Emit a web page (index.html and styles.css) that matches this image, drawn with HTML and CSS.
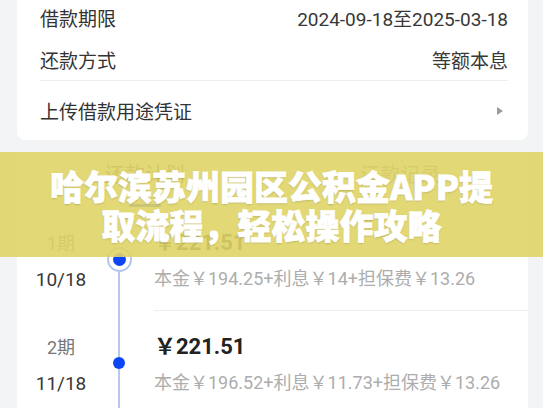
FILE: index.html
```html
<!DOCTYPE html>
<html lang="zh-CN">
<head>
    <meta charset="UTF-8">
    <meta name="viewport" content="width=device-width, initial-scale=1.0">
    <title>哈尔滨苏州园区公积金APP提取流程</title>
    <link rel="stylesheet" href="styles.css">
</head>
<body>
    <div class="page">
        <div class="card info">
            <div class="row">
                <span class="label">借款期限</span>
                <span class="value">2024-09-18至2025-03-18</span>
            </div>
            <div class="row">
                <span class="label">还款方式</span>
                <span class="value">等额本息</span>
            </div>
            <div class="divider"></div>
            <div class="row link">
                <span class="label">上传借款用途凭证</span>
                <svg class="arrow" width="6" height="8" viewBox="0 0 6 8"><path d="M0 0 L6 4 L0 8 Z" fill="#9a9a9a"/></svg>
            </div>
        </div>

        <div class="card plan">
            <div class="tabs">
                <div class="tab active"><span>还款计划</span><i class="tab-line"></i></div>
                <div class="tab"><span>还款记录</span></div>
            </div>

            <div class="term">
                <div class="term-date">
                    <div class="term-no">1期</div>
                    <div class="term-day">10/18</div>
                </div>
                <div class="term-axis">
                    <span class="axis-line blank"></span>
                    <span class="dot current"></span>
                    <span class="axis-line"></span>
                </div>
                <div class="term-detail">
                    <div class="amount">￥221.51</div>
                    <div class="breakdown">本金￥194.25+利息￥14+担保费￥13.26</div>
                </div>
            </div>

            <div class="term">
                <div class="term-date">
                    <div class="term-no">2期</div>
                    <div class="term-day">11/18</div>
                </div>
                <div class="term-axis">
                    <span class="axis-line"></span>
                    <span class="dot"></span>
                    <span class="axis-line"></span>
                </div>
                <div class="term-detail">
                    <div class="amount">￥221.51</div>
                    <div class="breakdown">本金￥196.52+利息￥11.73+担保费￥13.26</div>
                </div>
            </div>
        </div>

        <div class="banner">
            <h1>哈尔滨苏州园区公积金APP提取流程，轻松操作攻略</h1>
        </div>
    </div>
</body>
</html>
```

FILE: styles.css
```css
body {
    margin: 0;
    height: 408px;
    overflow: hidden;
    background-color: #f3f4f6;
    font-family: Roboto, "Noto Sans CJK SC", sans-serif;
    color: #333;
}
.page {
    position: relative;
    display: flow-root;
    padding: 0 15px 0 17px;
}
.card {
    background-color: #fff;
    border-radius: 8px;
}

/* loan info card */
.info {
    margin-top: -20px;
    padding: 16px 20px 0 23px;
}
.row {
    display: flex;
    justify-content: space-between;
    align-items: center;
    height: 42px;
    font-size: 19px;
}
.value {
    color: #383838;
}
.divider {
    height: 1px;
    background-color: #eeeeee;
}
.row.link {
    height: 59px;
}
.arrow {
    margin-right: 5px;
}

/* repayment plan card */
.plan {
    margin-top: 12px;
}
.tabs {
    display: flex;
}
.tab {
    flex: 1;
    display: flex;
    flex-direction: column;
    align-items: center;
    padding-top: 8px;
    font-size: 20px;
    line-height: 30px;
    color: #888;
}
.tab.active {
    color: #555;
}
.tab-line {
    width: 32px;
    height: 3px;
    margin-top: 14px;
    border-radius: 2px;
    background-color: #0b45f5;
}

.term {
    display: flex;
}
.term-date {
    width: 88px;
    padding-top: 22px;
    text-align: center;
    line-height: 30px;
}
.term-no {
    font-size: 18px;
    color: #777;
}
.term-day {
    margin-top: 6px;
    font-size: 19px;
    color: #383838;
}
.term-axis {
    width: 28px;
    display: flex;
    flex-direction: column;
    align-items: center;
}
.axis-line {
    flex: 1;
    width: 2px;
    background-color: #b3c9f2;
}
.axis-line.blank {
    background-color: transparent;
}
.dot {
    width: 12px;
    height: 12px;
    border-radius: 50%;
    background-color: #0b45f5;
}
.dot.current {
    width: 13px;
    height: 13px;
    margin: 6px 0;
    box-shadow: 0 0 0 4px #fff, 0 0 0 6px #b3c6ee;
}
.term-detail {
    flex: 1;
    margin-left: 21px;
    padding: 21px 0 16px;
    border-bottom: 1px solid #eeeeee;
    line-height: 30px;
}
.amount {
    font-size: 22px;
    font-weight: 700;
    color: #222;
}
.breakdown {
    margin-top: 6px;
    font-size: 18px;
    color: #adadad;
}

/* title overlay */
.banner {
    position: absolute;
    top: 152px;
    left: 0;
    right: 0;
    height: 105px;
    display: flex;
    align-items: center;
    justify-content: center;
    background-color: rgba(223, 212, 103, 0.9);
}
.banner h1 {
    max-width: 470px;
    margin: 0;
    font-family: "Noto Sans CJK SC", sans-serif;
    font-size: 34px;
    font-weight: 900;
    line-height: 39px;
    text-align: center;
    color: #fff;
    -webkit-text-stroke: 0.8px #fff;
    text-shadow: 0 1px 2px rgba(0, 0, 0, 0.2);
}
```
